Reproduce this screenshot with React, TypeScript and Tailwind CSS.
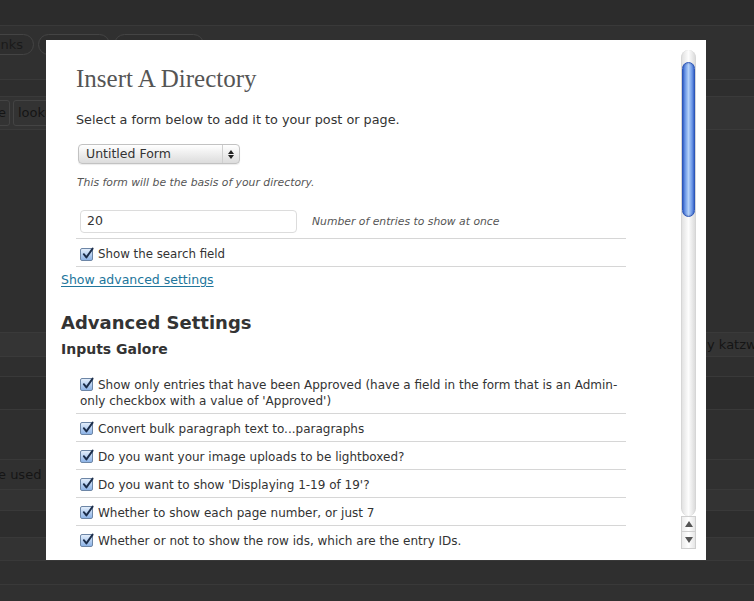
import React from "react";

const options = [
  "Show only entries that have been Approved (have a field in the form that is an Admin-",
  "Convert bulk paragraph text to...paragraphs",
  "Do you want your image uploads to be lightboxed?",
  "Do you want to show 'Displaying 1-19 of 19'?",
  "Whether to show each page number, or just 7",
  "Whether or not to show the row ids, which are the entry IDs.",
];

function Checkbox() {
  return (
    <span className="relative mr-[5px] inline-block h-[13px] w-[13px] shrink-0 rounded-[2px] border border-[#6d86a6] bg-gradient-to-b from-[#e3eefb] to-[#8db3e6] align-[-2px]">
      <svg viewBox="0 0 14 14" className="absolute -top-[2px] left-0 h-[14px] w-[14px]">
        <path
          d="M2.8 7.2 L5.4 10.4 L11.6 1.6"
          fill="none"
          stroke="#1b2d4a"
          strokeWidth="1.9"
          strokeLinecap="round"
          strokeLinejoin="round"
        />
      </svg>
    </span>
  );
}

function Scrollbar() {
  return (
    <div className="mt-[10px] flex h-[499px] w-[15px] flex-col">
      <div className="flex-1 rounded-t-full rounded-b-full border-x border-[#d6d6d6] bg-gradient-to-r from-[#e2e2e2] via-[#fdfdfd] to-[#dcdcdc] pt-[12px]">
        <div className="mx-auto h-[155px] w-[13px] rounded-full border border-[#2c57b8] bg-gradient-to-r from-[#3e6fd8] via-[#b3d0f7] to-[#4676dc] shadow-[inset_0_0_2px_rgba(0,0,80,0.4)]" />
      </div>
      <div className="flex h-[16px] items-center justify-center border border-[#cfcfcf] bg-gradient-to-r from-[#ececec] via-white to-[#e6e6e6]">
        <svg viewBox="0 0 8 6" className="h-[6px] w-[8px]">
          <path d="M4 0 L8 6 L0 6 Z" fill="#555" />
        </svg>
      </div>
      <div className="flex h-[17px] items-center justify-center border border-t-0 border-[#cfcfcf] bg-gradient-to-r from-[#ececec] via-white to-[#e6e6e6]">
        <svg viewBox="0 0 8 6" className="h-[6px] w-[8px]">
          <path d="M0 0 L8 0 L4 6 Z" fill="#555" />
        </svg>
      </div>
    </div>
  );
}

function Modal() {
  return (
    <div className="absolute left-[46px] top-[40px] flex h-[520px] w-[660px] bg-white">
      <div className="flex-1 overflow-hidden pl-[15px] pt-[25px] text-[#333]">
        <div className="pl-[15px]">
          <h1 className="text-[25px] leading-[28px] text-[#555]" style={{ fontFamily: '"Liberation Serif", serif' }}>
            Insert A Directory
          </h1>
          <p className="mt-[19px] text-[12.8px] leading-[16px]">Select a form below to add it to your post or page.</p>
          <div className="ml-[2px] mt-[16px] flex h-[20px] w-[162px] items-center rounded-[4px] border border-[#c2c2c2] bg-gradient-to-b from-white to-[#dcdcdc] shadow-[0_1px_1px_rgba(0,0,0,0.08)]">
            <span className="flex-1 pl-[7px] text-[12.5px] leading-[16px]">Untitled Form</span>
            <span className="flex h-full w-[17px] flex-col items-center justify-center gap-[1px] border-l border-[#cfcfcf]">
              <svg viewBox="0 0 6 4" className="h-[4px] w-[6px]"><path d="M3 0 L6 4 L0 4 Z" fill="#222" /></svg>
              <svg viewBox="0 0 6 4" className="h-[4px] w-[6px]"><path d="M0 0 L6 0 L3 4 Z" fill="#222" /></svg>
            </span>
          </div>
          <p className="ml-[1px] mt-[12px] text-[10.8px] italic leading-[14px] text-[#555]">
            This form will be the basis of your directory.
          </p>
          <div className="mt-[15px] w-[550px]">
            <div className="flex items-center border-b border-[#d6d6d6] py-[5px] pl-[4px]">
              <div className="flex h-[23px] w-[217px] items-center rounded-[4px] border border-[#dcdcdc] pl-[6px] text-[12.5px]">20</div>
              <span className="ml-[15px] mt-[2px] text-[10.8px] italic text-[#555]">Number of entries to show at once</span>
            </div>
            <div className="flex items-center border-b border-[#d6d6d6] pb-[4px] pl-[4px] pt-[7px] text-[11.8px] leading-[16px]">
              <Checkbox />
              Show the search field
            </div>
          </div>
        </div>
        <a className="mt-[5px] block text-[12.5px] leading-[16px] text-[#21759b] underline underline-offset-2">
          Show advanced settings
        </a>
        <h2 className="mt-[23px] text-[18px] font-bold leading-[24px] text-[#333]">Advanced Settings</h2>
        <h3 className="mt-[4px] text-[14px] font-bold leading-[20px] text-[#333]">Inputs Galore</h3>
        <ul className="ml-[15px] mt-[11px] w-[550px]">
          {options.map((o, i) => (
            <li
              key={o}
              className={`pb-[4px] pl-[4px] pr-[4px] pt-[7px] text-[12px] leading-[16px] ${
                i === options.length - 1 ? "" : "border-b border-[#d6d6d6]"
              }`}
            >
              {i === 0 ? (
                <>
                  <span className="whitespace-nowrap">
                    <Checkbox />
                    {o}
                  </span>
                  <br />
                  only checkbox with a value of 'Approved')
                </>
              ) : (
                <>
                  <Checkbox />
                  {o}
                </>
              )}
            </li>
          ))}
        </ul>
      </div>
      <div className="w-[25px]">
        <Scrollbar />
      </div>
    </div>
  );
}

function Pill({ children, w }: { children?: React.ReactNode; w: string }) {
  return (
    <span className={`flex h-[21px] items-center rounded-full border border-[#444] bg-[#2e2e2e] px-[8px] text-[13px] text-[#1a1a1a] ${w}`}>
      {children}
    </span>
  );
}

function Background() {
  return (
    <div className="flex flex-col text-[13px] text-[#151515]">
      <div className="h-[26px] border-b border-[#393939] bg-[#2c2c2c]" />
      <div className="flex h-[54px] items-start gap-[4px] border-b border-[#393939] bg-[#303030] pt-[8px]">
        <span className="-ml-[12px] flex h-[21px] w-[46px] items-center justify-end rounded-full border border-[#444] bg-[#2e2e2e] pr-[10px] text-[13px] text-[#1a1a1a]">
          inks
        </span>
        <Pill w="w-[72px]" />
        <Pill w="w-[90px]" />
      </div>
      <div className="h-[16px] bg-[#2e2e2e]" />
      <div className="flex h-[34px] items-center gap-[3px] border-y border-[#3a3a3a] bg-[#333]">
        <span className="-ml-[14px] flex h-[26px] w-[24px] items-center justify-end rounded-[3px] border border-[#444] pr-[3px]">e</span>
        <span className="flex h-[26px] w-[70px] items-center rounded-[3px] border border-[#444] pl-[4px]">lookup</span>
      </div>
      <div className="h-[202px] bg-[#2f2f2f]" />
      <div className="flex h-[25px] items-center border-y border-[#3a3a3a] bg-[#343434]">
        <span className="ml-[707px] whitespace-nowrap">y katzwell</span>
      </div>
      <div className="h-[20px] border-b border-[#393939] bg-[#2f2f2f]" />
      <div className="h-[33px] border-b border-[#393939] bg-[#2c2c2c]" />
      <div className="h-[50px] border-b border-[#393939] bg-[#2f2f2f]" />
      <div className="flex h-[30px] items-center border-b border-[#393939] bg-[#303030]">
        <span className="-ml-[2px] whitespace-nowrap">e used in</span>
      </div>
      <div className="h-[21px] border-b border-[#393939] bg-[#333]" />
      <div className="h-[27px] border-b border-[#393939] bg-[#2d2d2d]" />
      <div className="h-[23px] border-b border-[#393939] bg-[#333]" />
      <div className="h-[24px] border-b border-[#393939] bg-[#2f2f2f]" />
      <div className="h-[20px] bg-[#303030]" />
    </div>
  );
}

export default function App() {
  return (
    <div
      className="relative h-[601px] w-[754px] overflow-hidden bg-[#2f2f2f]"
      style={{ fontFamily: '"DejaVu Sans", "Liberation Sans", sans-serif' }}
    >
      <Background />
      <Modal />
    </div>
  );
}
